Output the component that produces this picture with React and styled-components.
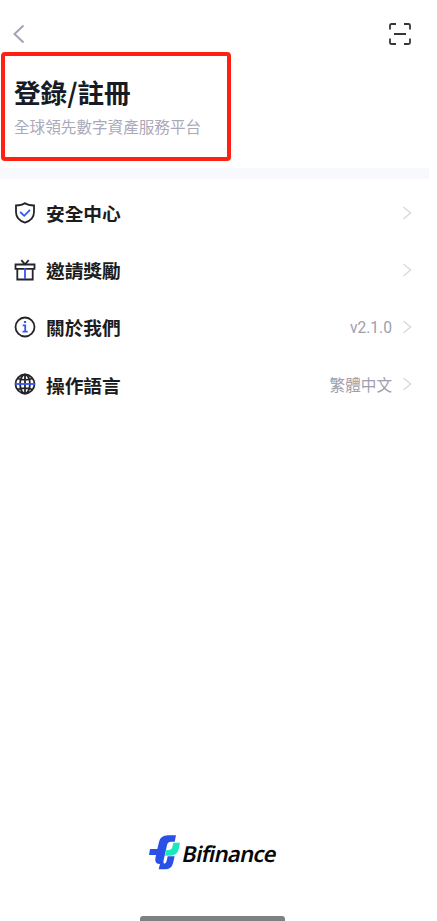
import React from 'react';
import styled, { createGlobalStyle } from 'styled-components';

const rows = [
  { icon: ShieldIcon, label: '安全中心' },
  { icon: GiftIcon, label: '邀請獎勵' },
  { icon: InfoIcon, label: '關於我們', value: 'v2.1.0' },
  { icon: GlobeIcon, label: '操作語言', value: '繁體中文' },
];

export default function App() {
  return (
    <Screen>
      <GlobalStyle />
      <TopBar>
        <BackIcon />
        <ScanIcon />
      </TopBar>
      <Account>
        <Title>登錄/註冊</Title>
        <Subtitle>全球領先數字資產服務平台</Subtitle>
      </Account>
      <Band />
      <Menu>
        {rows.map(({ icon: Icon, label, value }) => (
          <Row key={label}>
            <Icon />
            <Label>{label}</Label>
            {value && <Value>{value}</Value>}
            <ArrowIcon />
          </Row>
        ))}
      </Menu>
      <Footer>
        <LogoMark />
        <Brand>Bifinance</Brand>
      </Footer>
      <HomeIndicator />
    </Screen>
  );
}

function BackIcon() {
  return (
    <svg width="14" height="20" viewBox="0 0 14 20" fill="none" stroke="#a3a3b5" strokeWidth="2">
      <path d="M11.5 1.5 2.5 10l9 8.5" />
    </svg>
  );
}

function ScanIcon() {
  return (
    <svg width="24" height="24" viewBox="0 0 24 24" fill="none" stroke="#36363b" strokeWidth="1.8">
      <path d="M2 7.500V3.500Q2 2 3.500 2H8M16 2h4.500Q22 2 22 3.500V7.500M22 16.500v4Q22 22 20.500 22H16M8 22H3.500Q2 22 2 20.500V16.500M6 12h12" />
    </svg>
  );
}

function ArrowIcon() {
  return (
    <svg width="10" height="14" viewBox="0 0 10 14" fill="none" stroke="#d9d9e2" strokeWidth="1.5">
      <path d="m1.500 1 7 6-7 6" />
    </svg>
  );
}

function ShieldIcon() {
  return (
    <MenuIcon viewBox="0 0 22 22">
      <path d="M11 1.200C8.500 3 5.500 3.500 2 3.500V10c0 5 3.500 8.900 9 10.600 5.500-1.700 9-5.600 9-10.600V3.500C16.500 3.500 13.500 3 11 1.200Z" />
      <path d="m6.200 10 4 3.800 5.800-6" stroke="#3557ed" />
    </MenuIcon>
  );
}

function GiftIcon() {
  return (
    <MenuIcon viewBox="0 0 22 22">
      <path d="M1.500 5.500h19v4.300h-19ZM3.300 9.800v10.700h15.400V9.800M7.300 1.200 11 5.300l3.700-4.100" />
      <path d="M11 9v11" stroke="#3557ed" />
    </MenuIcon>
  );
}

function InfoIcon() {
  return (
    <MenuIcon viewBox="0 0 22 22">
      <circle cx="11" cy="11" r="9.500" />
      <path d="M8.700 9.300h2.500v6M8.500 15.700h5.200M9.900 6h2.200" stroke="#3557ed" />
    </MenuIcon>
  );
}

function GlobeIcon() {
  return (
    <MenuIcon viewBox="0 0 22 22">
      <circle cx="11" cy="11" r="9.500" />
      <ellipse cx="11" cy="11" rx="4.900" ry="9.500" />
      <path d="M11 1.500v19M3.500 5.500Q11 8.200 18.500 5.500M3.500 16.500Q11 13.800 18.500 16.500" />
      <path d="M1 11h20" stroke="#3557ed" />
    </MenuIcon>
  );
}

function LogoMark() {
  return (
    <svg width="36" height="42" viewBox="0 0 108 126">
      <path
        fill="#2b50e8"
        d="M90 16H66Q43 16 39 36L34 57H12L9 75H30L28 86Q26 102 42 102L38 118H57Q77 118 81 100L86 79H65L62 93Q60 101 54 101Q51 98 53 90L63 46Q65 35 74 35H86Z"
      />
      <path fill="#1ce8bd" d="M82 38H102L98 58Q93 77 73 77H57L61 60H70Q77 60 79 52Z" />
    </svg>
  );
}

const GlobalStyle = createGlobalStyle`
  body {
    margin: 0;
    background: #ffffff;
    font-family: Roboto, 'Noto Sans CJK TC', sans-serif;
  }
`;

const Screen = styled.main`
  width: 429px;
  height: 921px;
  display: flex;
  flex-direction: column;
  overflow: hidden;
`;

const TopBar = styled.header`
  height: 52px;
  padding: 16px 17px 0 12px;
  box-sizing: border-box;
  display: flex;
  justify-content: space-between;
  align-items: flex-start;

  svg:first-child {
    margin-top: 8px;
  }

  svg:last-child {
    margin-top: 6px;
  }
`;

const Account = styled.section`
  width: 230px;
  height: 109px;
  margin-left: 1px;
  padding: 19px 0 0 9px;
  box-sizing: border-box;
  border: 4px solid #ff2113;
  border-radius: 4px;
`;

const Title = styled.h1`
  margin: 0;
  color: #171b26;
  font-family: 'Noto Sans CJK TC', sans-serif;
  font-size: 26.6px;
  font-weight: 700;
  line-height: 34px;
`;

const Subtitle = styled.p`
  margin: 6px 0 0;
  color: #aaa9b9;
  font-family: 'Noto Sans CJK TC', sans-serif;
  font-size: 15.6px;
  line-height: 22px;
  white-space: nowrap;
`;

const Band = styled.div`
  height: 11px;
  flex: none;
  margin-top: 7px;
  background: #f8f9fd;
`;

const Menu = styled.nav`
  padding: 5px 17px 0 14px;
`;

const Row = styled.div`
  height: 57.2px;
  display: flex;
  align-items: center;
`;

const MenuIcon = styled.svg`
  width: 22px;
  height: 22px;
  fill: none;
  stroke: #24252b;
  stroke-width: 1.8px;
`;

const Label = styled.span`
  margin: 0 auto 0 10px;
  color: #1b1c20;
  font-family: 'Noto Sans CJK TC', sans-serif;
  font-size: 18.7px;
  font-weight: 700;
`;

const Value = styled.span`
  margin-right: 10px;
  padding-top: 3px;
  color: #9e9eac;
  font-size: 15.6px;
  line-height: 24px;
`;

const Footer = styled.footer`
  margin-top: auto;
  padding: 0 0 44px 146px;
  display: flex;
  align-items: center;
`;

const Brand = styled.span`
  margin: 3px 0 0 1px;
  color: #080808;
  font-family: 'Noto Sans', sans-serif;
  font-size: 22px;
  font-weight: 600;
  letter-spacing: -0.7px;
  transform: skewX(-12deg);
`;

const HomeIndicator = styled.div`
  width: 145px;
  height: 5px;
  flex: none;
  margin-left: 140px;
  border-radius: 3px 3px 0 0;
  background: #808080;
`;
